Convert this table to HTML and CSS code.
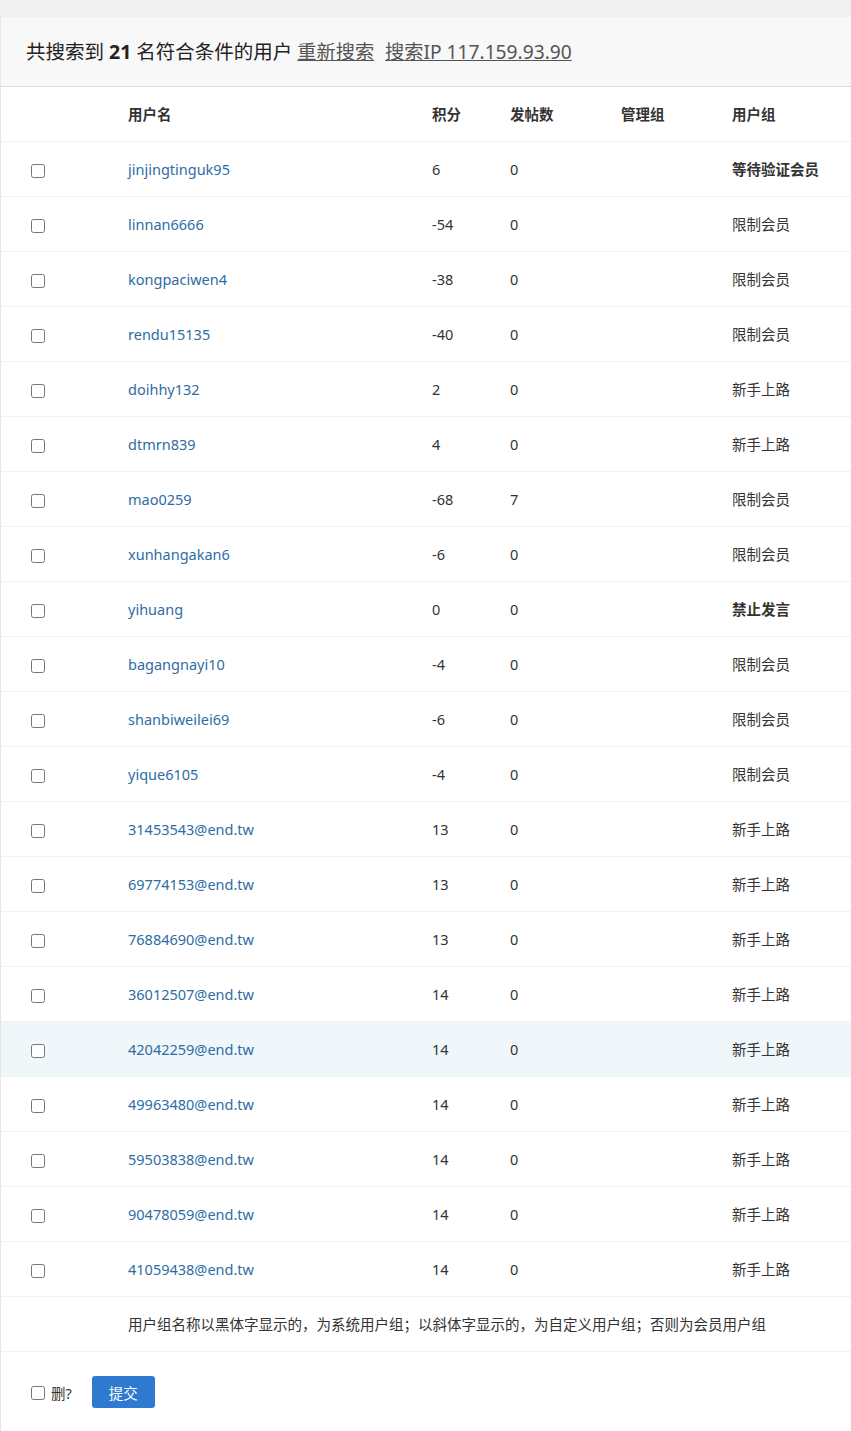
FILE: index.html
```html
<!DOCTYPE html>
<html lang="zh-CN">
<head>
  <meta charset="UTF-8">
  <meta name="viewport" content="width=device-width, initial-scale=1.0">
  <title>用户搜索结果</title>
  <link rel="stylesheet" href="styles.css">
</head>
<body>
  <div class="panel">
    <div class="panel-head">
      共搜索到 <b>21</b> 名符合条件的用户
      <a href="#" class="head-link">重新搜索</a>
      <a href="#" class="head-link">搜索IP 117.159.93.90</a>
    </div>

    <table class="users">
      <colgroup>
        <col class="c-check">
        <col class="c-name">
        <col class="c-credit">
        <col class="c-posts">
        <col class="c-admin">
        <col>
      </colgroup>
      <thead>
        <tr>
          <th></th>
          <th>用户名</th>
          <th>积分</th>
          <th>发帖数</th>
          <th>管理组</th>
          <th>用户组</th>
        </tr>
      </thead>
      <tbody>
        <tr><td><input type="checkbox"></td><td><a href="#">jinjingtinguk95</a></td><td>6</td><td>0</td><td></td><td><b>等待验证会员</b></td></tr>
        <tr><td><input type="checkbox"></td><td><a href="#">linnan6666</a></td><td>-54</td><td>0</td><td></td><td>限制会员</td></tr>
        <tr><td><input type="checkbox"></td><td><a href="#">kongpaciwen4</a></td><td>-38</td><td>0</td><td></td><td>限制会员</td></tr>
        <tr><td><input type="checkbox"></td><td><a href="#">rendu15135</a></td><td>-40</td><td>0</td><td></td><td>限制会员</td></tr>
        <tr><td><input type="checkbox"></td><td><a href="#">doihhy132</a></td><td>2</td><td>0</td><td></td><td>新手上路</td></tr>
        <tr><td><input type="checkbox"></td><td><a href="#">dtmrn839</a></td><td>4</td><td>0</td><td></td><td>新手上路</td></tr>
        <tr><td><input type="checkbox"></td><td><a href="#">mao0259</a></td><td>-68</td><td>7</td><td></td><td>限制会员</td></tr>
        <tr><td><input type="checkbox"></td><td><a href="#">xunhangakan6</a></td><td>-6</td><td>0</td><td></td><td>限制会员</td></tr>
        <tr><td><input type="checkbox"></td><td><a href="#">yihuang</a></td><td>0</td><td>0</td><td></td><td><b>禁止发言</b></td></tr>
        <tr><td><input type="checkbox"></td><td><a href="#">bagangnayi10</a></td><td>-4</td><td>0</td><td></td><td>限制会员</td></tr>
        <tr><td><input type="checkbox"></td><td><a href="#">shanbiweilei69</a></td><td>-6</td><td>0</td><td></td><td>限制会员</td></tr>
        <tr><td><input type="checkbox"></td><td><a href="#">yique6105</a></td><td>-4</td><td>0</td><td></td><td>限制会员</td></tr>
        <tr><td><input type="checkbox"></td><td><a href="#">31453543@end.tw</a></td><td>13</td><td>0</td><td></td><td>新手上路</td></tr>
        <tr><td><input type="checkbox"></td><td><a href="#">69774153@end.tw</a></td><td>13</td><td>0</td><td></td><td>新手上路</td></tr>
        <tr><td><input type="checkbox"></td><td><a href="#">76884690@end.tw</a></td><td>13</td><td>0</td><td></td><td>新手上路</td></tr>
        <tr><td><input type="checkbox"></td><td><a href="#">36012507@end.tw</a></td><td>14</td><td>0</td><td></td><td>新手上路</td></tr>
        <tr class="hover"><td><input type="checkbox"></td><td><a href="#">42042259@end.tw</a></td><td>14</td><td>0</td><td></td><td>新手上路</td></tr>
        <tr><td><input type="checkbox"></td><td><a href="#">49963480@end.tw</a></td><td>14</td><td>0</td><td></td><td>新手上路</td></tr>
        <tr><td><input type="checkbox"></td><td><a href="#">59503838@end.tw</a></td><td>14</td><td>0</td><td></td><td>新手上路</td></tr>
        <tr><td><input type="checkbox"></td><td><a href="#">90478059@end.tw</a></td><td>14</td><td>0</td><td></td><td>新手上路</td></tr>
        <tr><td><input type="checkbox"></td><td><a href="#">41059438@end.tw</a></td><td>14</td><td>0</td><td></td><td>新手上路</td></tr>
        <tr class="note"><td></td><td colspan="5">用户组名称以黑体字显示的，为系统用户组；以斜体字显示的，为自定义用户组；否则为会员用户组</td></tr>
      </tbody>
    </table>

    <div class="panel-foot">
      <label class="del"><input type="checkbox">删?</label>
      <button class="btn" type="button">提交</button>
    </div>
  </div>
</body>
</html>
```

FILE: styles.css
```css
body {
  margin: 0;
  padding: 0;
  background: #f0f0f0;
  color: #333;
  font-family: "Noto Sans", "Noto Sans CJK SC", sans-serif;
  font-size: 14.5px;
}

.panel {
  margin-top: 17px;
  background: #fff;
  border-left: 1px solid #e6e6e6;
}

.panel-head {
  height: 69px;
  padding-left: 25px;
  display: flex;
  align-items: center;
  gap: 5px;
  background: #f8f8f8;
  border-bottom: 1px solid #dcdcdc;
  font-size: 19.5px;
  line-height: 1;
  color: #222;
}
.panel-head b {
  font-weight: bold;
}
.head-link {
  color: #555;
  font-size: 19.2px;
  text-decoration: underline;
}
.head-link + .head-link {
  margin-left: 6px;
}

.users {
  width: 100%;
  border-collapse: collapse;
  table-layout: fixed;
}
.c-check  { width: 127px; }
.c-name   { width: 304px; }
.c-credit { width: 78px; }
.c-posts  { width: 111px; }
.c-admin  { width: 111px; }

.users th,
.users td {
  height: 53px;
  padding: 0 0 1px;
  text-align: left;
  border-bottom: 1px solid #f2f2f2;
  vertical-align: middle;
}
.users th {
  height: 52px;
  padding-bottom: 2px;
  font-weight: bold;
  color: #333;
}
.users td:first-child {
  padding: 0 0 1px 30px;
}
.users input[type="checkbox"] {
  margin: 0;
  width: 14px;
  height: 14px;
  vertical-align: middle;
}
.users a {
  color: #2e6da4;
  text-decoration: none;
}
.users td b {
  font-weight: bold;
  color: #333;
}
.users tr.hover td {
  background: #f0f7fb;
}

.panel-foot {
  display: flex;
  align-items: center;
  padding: 24px 0 23px 30px;
}
.del {
  display: flex;
  align-items: center;
  gap: 6px;
  margin-right: 20px;
}
.del input {
  margin: 1px 0 0;
  width: 14px;
  height: 14px;
}
.btn {
  height: 32px;
  padding: 0 17px;
  border: none;
  border-radius: 3px;
  background: #2d7ad0;
  color: #fff;
  font-family: inherit;
  font-size: 14.5px;
}
```
